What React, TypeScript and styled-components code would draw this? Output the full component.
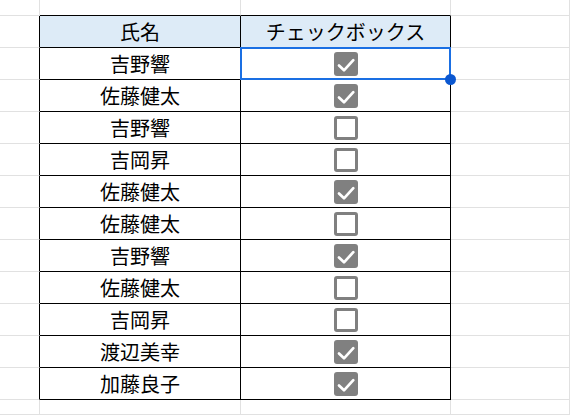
import React from "react";
import styled, { createGlobalStyle } from "styled-components";

const Global = createGlobalStyle`
  html, body { margin: 0; padding: 0; background: #ffffff; }
  body { font-family: "Noto Sans CJK JP", "Noto Sans", sans-serif; color: #000; }
`;

const Sheet = styled.div`
  display: grid;
  grid-template-columns: 40px 201px 210px 1fr;
  grid-template-rows: 16px repeat(12, 32px) 1fr;
  width: 570px;
  height: 415px;
  overflow: hidden;
`;

type Line = "light" | "dark";

const Cell = styled.div<{ $right: Line; $bottom: Line; $head?: boolean }>`
  position: relative;
  box-sizing: border-box;
  border-right: 1px solid ${(p) => (p.$right === "dark" ? "#000" : "#e1e1e1")};
  border-bottom: 1px solid ${(p) => (p.$bottom === "dark" ? "#000" : "#e1e1e1")};
  background: ${(p) => (p.$head ? "#ddebf7" : "transparent")};
  display: flex;
  align-items: center;
  justify-content: center;
  font-size: 20px;
  line-height: 1;
  white-space: nowrap;
`;

const Selection = styled.div`
  position: absolute;
  left: -1px;
  top: -1px;
  right: -1px;
  bottom: -1px;
  border: 2px solid #1a6fe3;
  pointer-events: none;
  z-index: 5;
`;

const Handle = styled.div`
  position: absolute;
  right: -7px;
  bottom: -7px;
  width: 11px;
  height: 11px;
  border-radius: 50%;
  background: #0b57d0;
`;

const Box = styled.div<{ $checked: boolean }>`
  box-sizing: border-box;
  width: 24px;
  height: 24px;
  margin-top: 1px;
  border-radius: 3px;
  background: ${(p) => (p.$checked ? "#808080" : "#ffffff")};
  border: ${(p) => (p.$checked ? "none" : "3px solid #808080")};
  display: flex;
`;

const Check = () => (
  <svg width="24" height="24" viewBox="0 0 24 24">
    <path d="M5 13.5 L10 18.3 L19.3 8.2" fill="none" stroke="#fff" strokeWidth="2.7" strokeLinecap="round" strokeLinejoin="round" />
  </svg>
);

const rows: [string, boolean][] = [
  ["吉野響", true],
  ["佐藤健太", true],
  ["吉野響", false],
  ["吉岡昇", false],
  ["佐藤健太", true],
  ["佐藤健太", false],
  ["吉野響", true],
  ["佐藤健太", false],
  ["吉岡昇", false],
  ["渡辺美幸", true],
  ["加藤良子", true],
];

export default function App() {
  return (
    <>
      <Global />
      <Sheet>
        {/* top partial row */}
        <Cell $right="light" $bottom="light" />
        <Cell $right="light" $bottom="dark" />
        <Cell $right="light" $bottom="dark" />
        <Cell $right="light" $bottom="light" />
        {/* header */}
        <Cell $right="dark" $bottom="light" />
        <Cell $right="dark" $bottom="dark" $head>氏名</Cell>
        <Cell $right="dark" $bottom="dark" $head>チェックボックス</Cell>
        <Cell $right="light" $bottom="light" />
        {rows.map(([name, checked], i) => (
          <React.Fragment key={i}>
            <Cell $right="dark" $bottom="light" />
            <Cell $right="dark" $bottom="dark">{name}</Cell>
            <Cell $right="dark" $bottom="dark">
              <Box $checked={checked}>{checked && <Check />}</Box>
              {i === 0 && (
                <Selection>
                  <Handle />
                </Selection>
              )}
            </Cell>
            <Cell $right="light" $bottom="light" />
          </React.Fragment>
        ))}
        {/* bottom partial row */}
        <Cell $right="light" $bottom="light" />
        <Cell $right="light" $bottom="light" />
        <Cell $right="light" $bottom="light" />
        <Cell $right="light" $bottom="light" />
      </Sheet>
    </>
  );
}
